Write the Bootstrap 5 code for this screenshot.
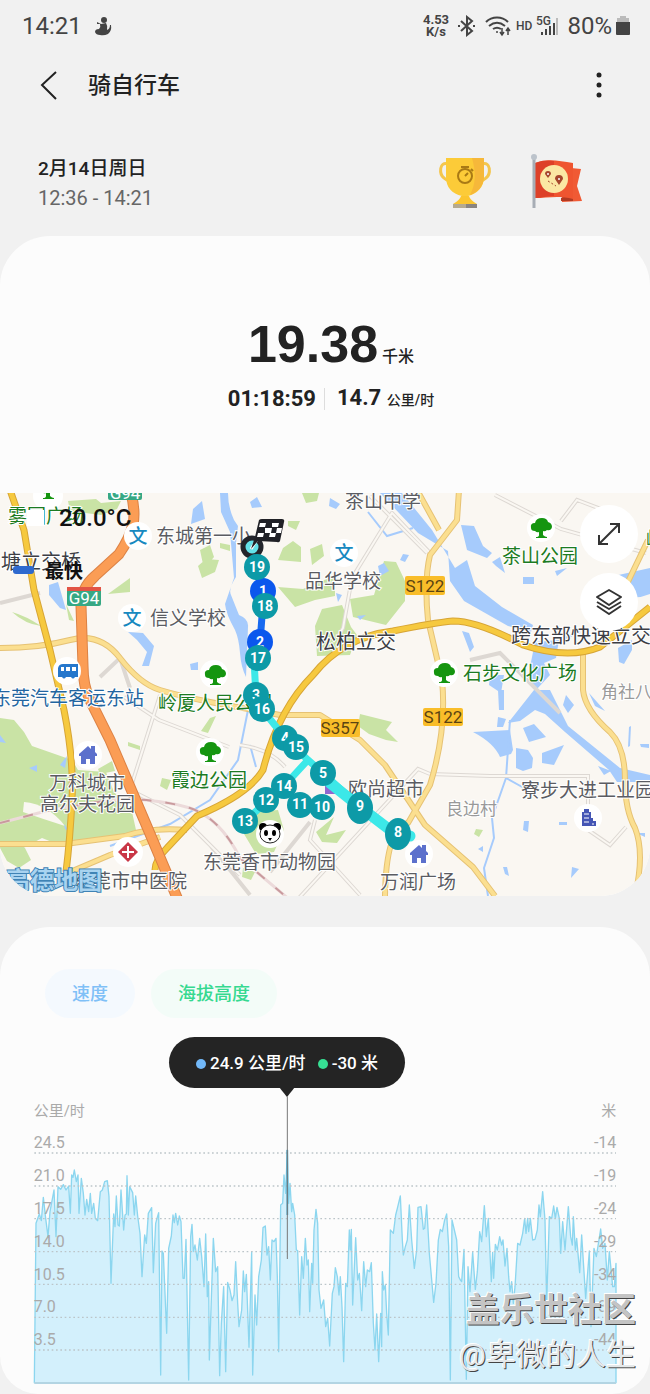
<!DOCTYPE html>
<html lang="zh-CN">
<head>
<meta charset="utf-8">
<meta name="viewport" content="width=device-width, initial-scale=1">
<title>骑自行车</title>
<link href="https://cdn.jsdelivr.net/npm/bootstrap@5.3.0/dist/css/bootstrap.min.css" rel="stylesheet">
<style>
body{background:#f1f1f1;color:#222;font-family:Roboto,"Noto Sans CJK SC",sans-serif;}
svg{display:block}
svg text{font-family:Roboto,"Noto Sans CJK SC",sans-serif}
.status-bar{height:52px;padding:0 20px 0 22px;color:#444;font-size:24px;line-height:24px}
.status-app{margin-left:12px}
.net-rate{font-size:13px;line-height:12px;font-weight:700}
.status-hd{font-size:12px;font-weight:500;line-height:12px}
.app-bar{height:68px;padding:0 36px}
.app-bar h1{font-size:23px;line-height:32px;font-weight:500;margin:0 0 0 24px;color:#222}
.icon-btn{border:0;background:none;padding:0;width:28px;height:36px}
.session{height:116px;padding:34px 68px 0 38px}
.session-date{font-size:19px;line-height:30px;font-weight:500;color:#222}
.session-hours{font-size:20px;line-height:28px;color:#666}
.awards{gap:38px}
.panel{background:#fcfcfc;border-radius:50px;overflow:hidden}
.summary{height:257px;padding:76px 0 0 12px}
.distance{font-family:"Liberation Sans",sans-serif;font-weight:700;font-size:52px;line-height:64px}
.distance-unit{font-size:16px;line-height:24px;font-weight:500}
.figure{font-size:22px;line-height:28px;font-weight:700}
.figure-unit{font-size:14px;font-weight:500}
.split{width:1px;height:22px;background:#ddd}
.map-btn{right:12px;width:58px;height:58px;border:0;border-radius:50%;background:#fff;padding:0}
.map-btn svg{margin:auto}
.expand-btn{top:12px}
.layers-btn{top:80px}
.chart-panel{margin-top:31px;padding-top:42px;border-radius:50px 50px 38px 38px}
.chip{border:0;border-radius:25px;padding:0 27px;height:49px;font-size:18px;font-weight:500}
.chip-speed{background:#f4f9fe;color:#7fc0f7}
.chip-height{background:#f3fcf8;color:#35d990}
.chips{padding:0 45px;gap:16px}
.tip{top:110px;left:26%;width:236px;height:51px;padding-top:3px;border-radius:26px;background:#242424;color:#fff;font-size:17px;font-weight:500}
.tip::after{content:"";position:absolute;left:50%;top:50px;border:8px solid transparent;border-top:10px solid #242424;border-bottom:0;transform:translateX(-50%)}
.dot{width:10px;height:10px;border-radius:50%}
.dot-speed{background:#72b8f8}
.dot-height{background:#36df93;margin-left:12px}
.chart{margin-top:72px}
.stamp{right:14px;bottom:16px;color:#888;text-shadow:1px 1px 0 #444,-1px -1px 0 #fff;text-align:right}
.stamp-site{font-size:34px;line-height:44px;font-weight:700;color:#c4c4c4}
.stamp-user{font-size:30px;line-height:46px;color:#e4e8ea}
</style>
</head>
<body>
<div class="status-bar d-flex align-items-center">
  <span>14:21</span>
  <svg class="status-app" width="18" height="20" viewBox="0 0 18 20" fill="#444"><circle cx="10" cy="4" r="3"/><path d="M3 6l4 2 5-1q2 3 1 7 3-1 3-5h1q1 6-3 9-4 2-8 1-4 0-5-3 0-3 4-3 2-2 1-5L3 8z"/></svg>
  <div class="ms-auto d-flex align-items-center">
    <div class="net-rate text-center me-2">4.53<br>K/s</div>
    <svg class="me-2" width="20" height="22" viewBox="0 0 20 22" fill="none" stroke="#444" stroke-width="2"><path d="M4 6l11 10-5 4V2l5 4L4 16"/><path d="M1 11h2M16 11h2"/></svg>
    <svg class="me-1" width="27" height="22" viewBox="0 0 27 22" fill="none" stroke="#444" stroke-width="2"><path d="M1 7c6-6 16-6 22 0M4 11c5-4 11-4 16 0M8 14c3-2 5-2 8 0"/><circle cx="12" cy="17" r="1" fill="#444" stroke="none"/><path d="M17 13v7M15 17l2 3 2-3M23 20v-7M21 16l2-3 2 3" stroke-width="1.5"/></svg>
    <span class="status-hd me-1">HD</span>
    <svg class="me-2" width="23" height="22" viewBox="0 0 23 22"><text x="0" y="10" font-size="12" font-weight="500" fill="#444">5G</text><path d="M6 20v-3M10 20v-6M14 20v-9M18 20V8" stroke="#444" stroke-width="2"/><path d="M21 20V3" stroke="#bbb" stroke-width="2"/></svg>
    <span>80%</span>
    <svg class="ms-1" width="14" height="20" viewBox="0 0 14 20"><path d="M4 0h6v2h3v5H1V2h3z" fill="#bbb"/><path d="M0 6h14v12q0 1-1 1H1q-1 0-1-1z" fill="#444"/></svg>
  </div>
</div>
<header class="app-bar d-flex align-items-center">
  <button class="icon-btn" aria-label="返回"><svg width="28" height="36" viewBox="0 0 28 36" fill="none" stroke="#222" stroke-width="2"><path d="M20 4L6 17l14 14"/></svg></button>
  <h1>骑自行车</h1>
  <button class="icon-btn ms-auto" aria-label="更多"><svg width="28" height="36" viewBox="0 0 28 36" fill="#222"><circle cx="13" cy="7" r="2.500"/><circle cx="13" cy="17" r="2.500"/><circle cx="13" cy="27" r="2.500"/></svg></button>
</header>
<section class="session d-flex justify-content-between">
  <div>
    <div class="session-date">2月14日周日</div>
    <div class="session-hours">12:36 - 14:21</div>
  </div>
  <div class="awards d-flex">
    <svg width="54" height="54" viewBox="0 0 54 54"><path d="M10 10C1 7 1 20 6 24c3 3 6 3 8 4M44 10c9-3 9 10 4 14-3 3-6 3-8 4" fill="none" stroke="#f4c64e" stroke-width="3"/><path d="M8 4h38v19c0 10-7 17-16 19v4h-6v-4C14 40 8 33 8 23z" fill="#fccb38"/><path d="M34 4h12v19c0 9-7 16-14 18C38 30 38 18 34 4z" fill="#f6b83a"/><path d="M23 42h8q1 4 8 8H15q7-4 8-8z" fill="#fbc52f"/><path d="M15 50h24v4H15z" fill="#b5aa90"/><path d="M28 50h11v4H28z" fill="#8a8580"/><g fill="none" stroke="#a97a15" stroke-width="2"><circle cx="27" cy="22" r="7"/><path d="M23 13h8M27 22l3-3M33 15l2 2"/></g></svg>
    <svg width="52" height="54" viewBox="0 0 52 54"><path d="M31 13l20 2-4 17 5 15-20 1z" fill="#f05a34"/><path d="M31 44l12-4v7H31z" fill="#b23a22"/><path d="M5 9c13-5 24-2 38 0v36C29 41 17 44 5 44z" fill="#ef5530"/><path d="M5 9c8-3 14-3 19-2v35c-8 0-13 2-19 2z" fill="#dd4028"/><path d="M4 4v50" stroke="#a7adb5" stroke-width="3"/><circle cx="4" cy="3" r="3" fill="#bcc3cb"/><circle cx="24" cy="25" r="14" fill="#fbe7a3"/><path d="M18 24l-3-4q0-3 3-3t3 3zM29 31l-4-6q0-4 4-4t4 4z" fill="#a5462c"/><circle cx="29" cy="25" r="1" fill="#fff"/><circle cx="18" cy="20" r="1" fill="#fff"/><path d="M18 27l8 5" stroke="#a5462c" stroke-dasharray="2"/></svg>
  </div>
</section>
<main>
<section class="panel">
  <div class="summary">
    <div class="d-flex justify-content-center align-items-baseline"><span class="distance">19.38</span><span class="distance-unit ms-1">千米</span></div>
    <div class="d-flex justify-content-center align-items-center mt-2">
      <span class="figure">01:18:59</span><span class="split ms-2 me-2"></span><span class="figure ms-1">14.7 <span class="figure-unit">公里/时</span></span>
    </div>
  </div>
  <div class="position-relative">
    <svg width="100%" viewBox="0 493 650 403" role="img" aria-label="骑行路线地图">
      <rect y="493" width="650" height="403" fill="#faf7f2"/>
      <g fill="#c9e3a5">
        <path d="M0 718l14 2 10 12 8 14 40 14 6 10 28 2 8 20 18 20 4 18-28 10-24 4-32-2-10-4-22 12-20-2z"/>
        <path d="M0 848h25l6 12-12 8-12-7zM68 501l28-2 5 4 20-2-4 8-16 6-31-4zM108 594l22-16v14zM66 604l8 17-5-1zM12 612q14 4 29 14-16-2-29-14zM198 566l8-7 13 1-4 12-13 6zM220 543l10 2v6l-10-3zM288 521h12l-4 9-8-4zM283 548l10-7 8 6v15l-23-2zM310 549l12-5 2 12-12 9zM278 587l25 2 26-11 6-4v22l-20 4-20 7zM350 599l24-4 10-34 12 1 9 19v20l-19 24-33-8zM322 609l20-4 9 22 6 8-7 20-33 1-2-30zM302 493h17l-2 8-11 2zM200 550l10-5 4 12-10 12z"/>
        <path d="M256 812l22-2 6 20-10 22-18 2-12-20zM316 832l18-15-8 18 20-5-9 13-15-1zM360 714l16 4 16 4-6 8 12 12-12-2-17-6-11-8zM128 742l12 4v4l-12-4zM201 731l9-13 6-2-8 17zM476 829l7 1-4 7-5-3zM162 778l9 2-4 10-7-4zM98 769l14-8 3 10-15 3zM243 868l12 4-4 8-9-3z"/>
      </g>
      <path d="M24 802q24 2 41 24-22-7-42-14z" fill="#faf7f2"/>
      <g fill="#a6cbfc">
        <path d="M220 493h8q0 14 6 27l4 6-2 17v34q-8 12-5 18l8 20q10 4 9 12l-2 50q-5-10-6-24-1-14-5-23-9-16-10-26l9-26-4-46-9-20z"/>
        <path d="M380 493h22l30 37 23 38 12-8 8 26 27 21 31 18-2 7-23-6-44-25-14-20-2-30-30-18z"/>
        <path d="M461 525l13 1 9 20 9 7-5 5-20-8zM492 562l8-5 5 16-9-7zM523 577h11v7h-11zM555 571l12-3-10 8zM462 631l7 2 5 14-4 5zM535 642l24-2-3 18-12 5 6 12-13 14-9-12zM490 675h14l-3 18-12-8zM618 648l14-8v10l-8 14-5-2zM605 578l45-10v26q-14 6-28 2z"/>
        <path d="M534 690h16l18 36 52 42 30 7v7h-33l-8-12-44-38-20-18-10-4-15 11-12 2zM473 732l37-2 3 20-2 4-11 3q-6-14-27-25zM523 728l11-4 12 13-17 5zM516 748l12 2 5 8-1 10-9 3-7-3zM542 753l22-8-10 20-12-2zM498 690h6v20h-5zM589 693l16 18-10-5zM566 695l8 10-6 8-5-8zM630 746l1-20-2 1-1 20zM598 766l13 5-7 4zM498 717l8 2-3 8h-6zM640 744h9v4l-8-1zM524 821h5l-1 11-5-2zM559 822h8v3h-8zM483 852l-5-3 5-3zM503 867h4l2 9-4-2zM572 867l7 2-8 9zM636 833h9v4z"/>
        <path d="M49 585l9-3 8 28-6-2-11-13zM193 509l9-8 3 18-14 5zM128 632l15 1 11 13-5 20h-7l5-14-10-12zM190 664l8-2v8h-7zM0 735l6 8-6-1zM60 765l7-9-2 12zM29 768l8-3v7zM64 824l6 8-5-3zM250 502l7-5 5 10-10 1zM330 498l10 6-4 5-7-3zM378 566l6-3 5 8-9 5zM357 616l9-1-6 5zM403 554l6 1-4 7-5-2zM336 593l6 2-4 7z"/>
      </g>
      <g fill="none" stroke="#a6cbfc" stroke-width="2"><path d="M250 700l-12 60-28 40-40 24-60 22M506 778l-14 40 2 20-10 30 4 28M510 720l-4 58 18 10M368 512l19 24 26-8M250 745l6 22M560 640l20-8"/></g>
      <g fill="none" stroke="#ddd8d3" stroke-width="4"><path d="M370 496l57 57M430 553l-38-40-40 65-9 50-6 10M495 495l66 34 85 24M561 521l16-21 45 17M124 697l35 23 70 27M160 695l-30 95 50 25 60 60M0 603l40-10M100 677l20-19 10 30M240 745q30 4 45 22M430 774l60 2h98v54l22 15 16-18M430 774l-12-5-120 130M270 872l40-50M470 660l30-7 60 60M210 845l40 50M315 820l-5 20 50 55"/></g>
      <g fill="none" stroke="#faf7f2" stroke-width="2"><path d="M370 496l57 57M430 553l-38-40-40 65-9 50-6 10M495 495l66 34 85 24M561 521l16-21 45 17M124 697l35 23 70 27M160 695l-30 95 50 25 60 60M240 745q30 4 45 22M430 774l60 2h98v54l22 15 16-18M430 774l-12-5-120 130M315 820l-5 20 50 55"/></g>
      <path d="M0 823l50-13 60-10q40-3 80 8 30 10 50 50l50 42" fill="none" stroke="#ecdada" stroke-width="3"/><path d="M0 823l50-13 60-10q40-3 80 8 30 10 50 50l50 42" fill="none" stroke="#c99a9d" stroke-width="2" stroke-dasharray="10 14"/>
      <path d="M0 648q40 0 70-8t50 18 40 32 50 12l70 13h40l40 25 25 25 40 60 48 42 22 29M0 844h65l60-8q25-9 62-6M70 872l40-17 50-18M459 490l-2 30-27 35q-6 25-2 65l14 60q5 50-12 105l-22 38q-22 5-23 73M417 490l22 40M583 650v40q2 20 27 42 15 15 15 48 0 30 10 48 10 25 0 68M648 540l-24 50" fill="none" stroke="#e6c274" stroke-width="6" stroke-linejoin="round"/>
      <path d="M0 648q40 0 70-8t50 18 40 32 50 12l70 13h40l40 25 25 25 40 60 48 42 22 29M0 844h65l60-8q25-9 62-6M70 872l40-17 50-18M459 490l-2 30-27 35q-6 25-2 65l14 60q5 50-12 105l-22 38q-22 5-23 73M417 490l22 40M583 650v40q2 20 27 42 15 15 15 48 0 30 10 48 10 25 0 68M648 540l-24 50" fill="none" stroke="#fbdf90" stroke-width="4" stroke-linejoin="round"/>
      <path d="M10 490l14 40 10 60 16 60 14 60q10 50 8 90t-6 72M155 870q0-10 12-22l30-32q52-22 66-46 15-60 50-95 30-38 80-44 40-8 60-10 25 0 70 24 45 15 77 2l50-40" fill="none" stroke="#d7a536" stroke-width="7"/>
      <path d="M10 490l14 40 10 60 16 60 14 60q10 50 8 90t-6 72M155 870q0-10 12-22l30-32q52-22 66-46 15-60 50-95 30-38 80-44 40-8 60-10 25 0 70 24 45 15 77 2l50-40" fill="none" stroke="#f6c93f" stroke-width="5"/>
      <path d="M130 490q6 20 3 34t-14 30l-24 22q-14 12-14 30l2 60q0 20 7 34l20 40 35 82 33 78" fill="none" stroke="#dc8245" stroke-width="11"/>
      <path d="M130 490q6 20 3 34t-14 30l-24 22q-14 12-14 30l2 60q0 20 7 34l20 40 35 82 33 78" fill="none" stroke="#fb9d55" stroke-width="9"/>

      <g fill="#fff"><circle cx="138" cy="536" r="14"/><circle cx="132" cy="618" r="14"/><circle cx="344" cy="553" r="14"/><circle cx="67" cy="671" r="14"/><circle cx="214" cy="674" r="14"/><circle cx="88" cy="755" r="14"/><circle cx="210" cy="752" r="14"/><circle cx="128" cy="852" r="15"/><circle cx="541" cy="528" r="14"/><circle cx="444" cy="673" r="14"/><circle cx="419" cy="854" r="14"/><circle cx="588" cy="818" r="14"/><circle cx="270" cy="834" r="14"/><circle cx="48" cy="496" r="15"/></g>
      <defs><g id="tree"><path d="M-10 0q-1-5 4-5 1-5 7-5 5 0 6 4 4 1 4 5-1 4-5 3-2 2-4 1v4q2 2 4 2v1H-5V9q3 0 3-2V4q-2 1-4-1-4 0-4-3z" fill="#159510"/></g><g id="house" fill="#5c70cc"><path d="M-9-1L0-9l3 3v-3h4v6l2 2v2H7v8H2V4h-4v5h-5V1h-2z"/></g></defs>
      <use href="#tree" x="541" y="528"/><use href="#tree" x="444" y="673"/><use href="#tree" x="215" y="675"/><use href="#tree" x="210" y="752"/><use href="#tree" x="48" y="489"/>
      <use href="#house" x="88" y="755"/><use href="#house" x="419" y="854"/>
      <path d="M58 677v-9q1-4 5-4h15v13h-3q-2 3-4 0h-5q-2 3-4 0z" fill="#2677cc"/><path d="M61 671v-4h3v4zM66 667h4v4h-4zM72 667h4v4h-4z" fill="#fff"/>
      <path d="M128 842l10 10-10 10-10-10z" fill="#c93747"/><path d="M128 846v12M122 852h12" stroke="#fff" stroke-width="2"/>
      <path d="M582 826v-14h2v-3h5v3h2v6h2v3h3v5z" fill="#4556b5"/><path d="M584 814h5M584 818h5M584 822h5M592 824h2" stroke="#fff"/>
      <circle cx="263" cy="827" r="4"/><circle cx="277" cy="827" r="4"/><ellipse cx="270" cy="834" rx="10" ry="9" fill="#fff" stroke="#222"/><ellipse cx="266" cy="833" rx="2" ry="3"/><ellipse cx="274" cy="833" rx="2" ry="3"/><path d="M268 838h4l-2 3z"/>
      <g font-size="19" fill="#1789c0" text-anchor="middle" font-weight="500"><text x="138" y="543">文</text><text x="132" y="625">文</text><text x="344" y="560">文</text></g>

      <g font-size="19" fill="#5b5c62" stroke="#fff" stroke-width="2" paint-order="stroke">
        <text x="345" y="508">茶山中学</text><text x="156" y="543">东城第一小</text><text x="305" y="588">品华学校</text><text x="150" y="625">信义学校</text>
        <text x="49" y="790">万科城市</text><text x="40" y="811">高尔夫花园</text><text x="73" y="888">东莞市中医院</text><text x="203" y="869">东莞香市动物园</text><text x="348" y="796">欧尚超市</text><text x="380" y="889">万润广场</text><text x="521" y="797">寮步大进工业园区</text>
        <g font-size="20" fill="#3d3e45"><text x="316" y="649">松柏立交</text><text x="511" y="643">跨东部快速立交</text><text x="1" y="569">塘立交桥</text></g>
        <g font-size="17" fill="#999"><text x="446" y="815">良边村</text><text x="601" y="698">角社八</text></g>
        <g fill="#1c7b22"><text x="502" y="563">茶山公园</text><text x="463" y="680">石步文化广场</text><text x="158" y="710">岭厦人民公园</text><text x="171" y="787">霞边公园</text><text x="8" y="523">雾园广场</text><text x="646" y="546">峰</text></g>
        <text x="-8" y="705" fill="#2265a0">东莞汽车客运东站</text>
      </g>
      <rect x="27" y="510" width="17" height="16" fill="#fff"/><rect x="13" y="566" width="21" height="8" rx="3" fill="#2e69cf"/>
      <g font-size="17" text-anchor="middle"><rect x="108" y="484" width="34" height="16" rx="2" fill="#36a884"/><text x="125" y="499" fill="#fff">G94</text><rect x="67" y="587" width="34" height="19" rx="2" fill="#36a884"/><path d="M67 587h34v4H67z" fill="#e25445"/><text x="84" y="604" fill="#fff">G94</text>
      <g fill="#f9bd29"><rect x="405" y="576" width="40" height="19" rx="2"/><rect x="321" y="719" width="39" height="18" rx="2"/><rect x="423" y="708" width="40" height="18" rx="2"/></g><g fill="#5b4312"><text x="425" y="592">S122</text><text x="340" y="734">S357</text><text x="443" y="723">S122</text></g></g>
      <path d="M325 784h12v10h-12z" fill="#9067cf"/>
      <g fill="none" stroke-width="7" stroke-linecap="round" stroke-linejoin="round"><path d="M252 547l12 44-4 51" stroke="#1769f0"/><path d="M254 660l2 36 6 13 23 29 23 22 15 13 37 34M308 760l-24 26-39 35" stroke="#3ce8e8"/><path d="M330 783l30 24 38 29h12" stroke="#3ce8e8" stroke-width="11"/></g>
      <circle cx="252" cy="547" r="9" fill="#65e1e8" stroke="#23252b" stroke-width="5"/><path d="M251 549l7-11" stroke="#fff" stroke-width="3"/>
      <path d="M259 520q1-1 3-1h20q3 0 2 3l-4 19q-1 2-3 1l-19-1-7 8 4-12z" fill="#202126"/><path d="M260 523h6l-1 4h-6zM272 523h7l-1 4h-6zM265 528h7l-1 5h-6zM277 528h5l-1 5h-5zM258 533h6l-1 4h-6zM270 533h6l-1 4h-6z" fill="#fff"/>
      <g font-size="14" font-weight="700" text-anchor="middle" fill="#fff">
        <circle cx="263" cy="591" r="13" fill="#0b57ed"/><text x="263" y="596">1</text><circle cx="260" cy="642" r="13" fill="#0b57ed"/><text x="260" y="647">2</text>
        <g fill="#0d9aa7"><circle cx="257" cy="567" r="13"/><circle cx="265" cy="606" r="13"/><circle cx="258" cy="658" r="13"/><circle cx="256" cy="695" r="13"/></g><text x="257" y="572">19</text><text x="265" y="611">18</text><text x="258" y="663">17</text><text x="256" y="700">3</text>
        <g fill="#0d9aa7"><circle cx="262" cy="709" r="13"/><circle cx="285" cy="738" r="13"/></g><text x="262" y="714">16</text><text x="285" y="743">4</text>
        <g fill="#0d9aa7"><circle cx="296" cy="747" r="13"/><circle cx="323" cy="773" r="13"/><circle cx="284" cy="786" r="13"/><circle cx="266" cy="800" r="13"/><circle cx="300" cy="805" r="13"/><circle cx="322" cy="807" r="13"/><ellipse cx="360" cy="808" rx="13" ry="16"/><ellipse cx="398" cy="834" rx="13" ry="16"/><circle cx="245" cy="821" r="13"/></g>
        <text x="296" y="752">15</text><text x="323" y="778">5</text><text x="284" y="791">14</text><text x="266" y="805">12</text><text x="300" y="809">11</text><text x="322" y="812">10</text><text x="360" y="811">9</text><text x="398" y="837">8</text><text x="245" y="826">13</text>
      </g>
      <g fill="#111"><text x="59" y="526" font-size="24" font-weight="500">20.0°C</text><text x="45" y="578" font-size="19" font-weight="700">最快</text></g>
      <text x="6" y="889" font-size="24" font-weight="700" fill="#a8d3f0" stroke="#3f83b5" stroke-width="2" paint-order="stroke">高德地图</text>
    </svg>
    <button class="map-btn expand-btn position-absolute" aria-label="展开"><svg width="26" height="26" viewBox="0 0 26 26" fill="none" stroke="#333" stroke-width="2"><path d="M3 23L23 3M14 3h9v9M3 14v9h9"/></svg></button>
    <button class="map-btn layers-btn position-absolute" aria-label="图层"><svg width="28" height="28" viewBox="0 0 28 28" fill="none" stroke="#333" stroke-width="2" stroke-linejoin="round"><path d="M14 2l12 7-12 8L2 9zM2 14l12 7 12-7M2 18l12 8 12-8"/></svg></button>
  </div>
</section>
<section class="panel chart-panel position-relative">
  <div class="chips d-flex"><button class="chip chip-speed">速度</button><button class="chip chip-height">海拔高度</button></div>
  <svg class="chart" width="100%" viewBox="0 0 1950 912" role="img" aria-label="速度图表">
    <path d="M103 878L108 400 118 372 124 392 130 322 137 385 144 440 150 365 162 300 168 440 174 290 182 298 190 284 198 300 206 288 211 370 215 255 219 262 223 240 229 275 234 255 237 370 244 265 250 310 255 375 260 328 266 365 271 310 275 370 281 340 286 385 293 392 301 305 307 300 314 275 322 272 327 320 333 580 341 372 345 410 349 318 354 405 358 408 363 300 371 420 375 375 379 372 381 257 385 375 389 290 398 308 403 375 407 318 413 378 420 430 426 560 434 435 439 460 445 370 455 353 460 548 467 400 471 385 476 368 482 855 486 483 490 490 500 730 506 475 514 438 519 375 523 398 527 370 533 405 538 378 543 395 549 565 553 565 558 448 566 870 572 440 576 403 580 485 585 465 592 510 599 445 605 500 612 590 617 432 622 620 626 575 628 810 640 445 647 545 653 530 659 857 664 700 671 590 677 845 683 577 690 600 696 632 702 615 707 515 713 640 717 710 725 660 730 543 734 605 739 553 747 772 755 485 758 855 765 615 770 705 776 560 784 510 789 413 796 408 801 495 806 470 811 570 816 450 822 455 828 445 832 560 836 785 842 345 848 340 852 255 857 310 862 180 866 340 870 280 875 365 878 340 884 375 889 480 893 482 899 675 905 500 910 565 916 445 921 525 925 510 929 665 935 520 938 580 942 420 948 358 953 400 957 600 963 655 971 630 977 710 983 685 989 768 997 610 1002 590 1006 533 1012 560 1017 615 1021 560 1026 650 1031 815 1037 580 1042 590 1048 420 1051 480 1054 418 1058 645 1067 443 1073 570 1078 550 1085 662 1091 515 1097 590 1102 540 1109 545 1114 518 1120 700 1125 780 1130 672 1136 815 1142 670 1145 770 1147 545 1151 600 1156 585 1160 670 1165 735 1171 420 1180 430 1187 375 1192 355 1201 318 1207 450 1210 495 1216 470 1222 450 1228 345 1235 450 1243 535 1250 480 1254 352 1263 350 1270 418 1274 415 1280 345 1288 490 1301 637 1308 580 1315 450 1321 418 1327 425 1334 390 1340 372 1346 470 1351 870 1356 390 1362 415 1370 450 1376 560 1381 570 1385 575 1392 478 1399 868 1404 530 1410 605 1418 487 1426 598 1432 545 1439 425 1445 455 1453 347 1459 440 1465 385 1474 575 1478 487 1481 565 1486 463 1492 480 1499 440 1505 465 1509 450 1515 528 1521 475 1526 560 1530 605 1535 575 1540 640 1545 590 1553 460 1560 465 1568 430 1574 385 1578 430 1583 385 1586 425 1591 385 1598 450 1605 448 1612 420 1617 345 1621 380 1628 305 1635 390 1640 640 1648 380 1655 385 1661 348 1666 385 1671 352 1678 385 1682 490 1688 395 1695 480 1705 350 1712 440 1717 465 1720 380 1726 480 1730 445 1739 548 1745 435 1757 625 1768 483 1773 710 1782 475 1789 500 1802 417 1808 475 1815 460 1822 570 1828 485 1838 590 1843 590 1848 520V878z" fill="#d3f0fc" stroke="#8cd6ef" stroke-width="4" stroke-linejoin="round"/>
    <path d="M103 189H1848M103 288H1848M103 386H1848M103 485H1848M103 583H1848M103 682H1848M103 780H1848" stroke="#bcc5c9" stroke-width="4" stroke-dasharray="5 8"/>
    <path d="M103 879H1848" stroke="#b3d5e3" stroke-width="6"/>
    <path d="M862 180V375" stroke="#3d9fc4" stroke-width="5"/><path d="M862 20V507" stroke="#777" stroke-width="3"/>
    <g font-size="48" fill="#aaa"><text x="101" y="77" font-size="45">公里/时</text><text x="101" y="174">24.5</text><text x="101" y="274">21.0</text><text x="101" y="371">17.5</text><text x="101" y="470">14.0</text><text x="101" y="569">10.5</text><text x="101" y="667">7.0</text><text x="101" y="766">3.5</text>
    <g text-anchor="end"><text x="1849" y="77" font-size="45">米</text><text x="1849" y="174">-14</text><text x="1849" y="274">-19</text><text x="1849" y="371">-24</text><text x="1849" y="470">-29</text><text x="1849" y="569">-34</text><text x="1849" y="667">-39</text><text x="1849" y="766">-44</text></g></g>
  </svg>
  <div class="tip position-absolute d-flex align-items-center justify-content-center"><span class="dot dot-speed me-1"></span>24.9 公里/时<span class="dot dot-height me-1"></span>-30 米</div>
  <div class="stamp position-absolute"><div class="stamp-site">盖乐世社区</div><div class="stamp-user">@卑微的人生</div></div>
</section>
</main>
<script src="https://cdn.jsdelivr.net/npm/bootstrap@5.3.0/dist/js/bootstrap.bundle.min.js"></script>
</body>
</html>
